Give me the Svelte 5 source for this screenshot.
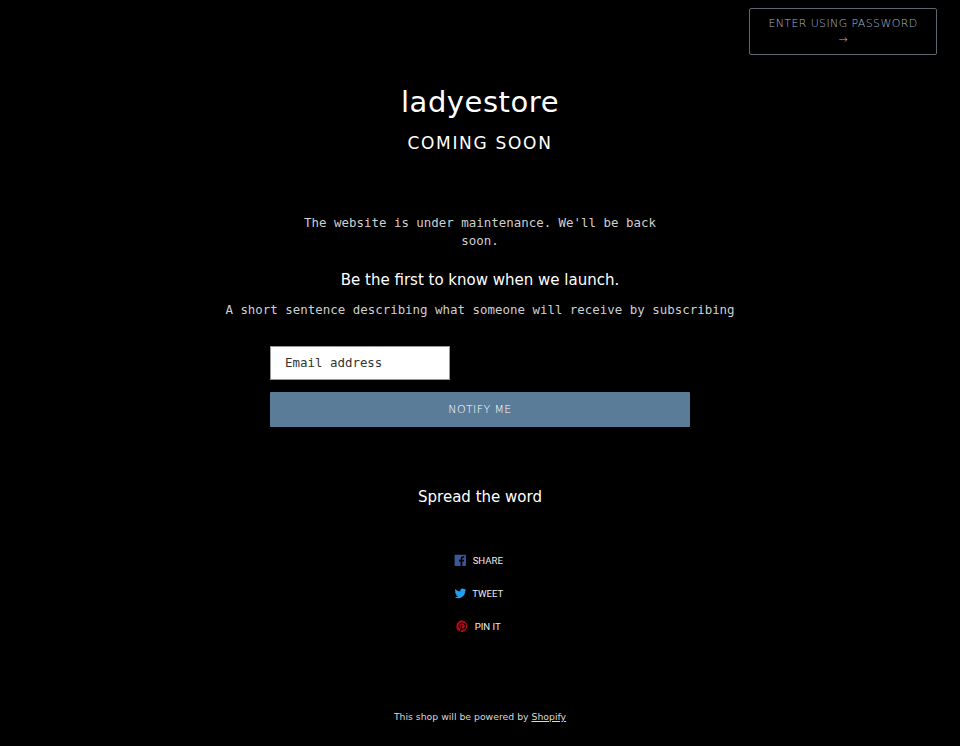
<script>
  const shares = [
    { label: 'SHARE', color: '#3b5998', path: 'M2 1h16a1 1 0 0 1 1 1v16a1 1 0 0 1-1 1h-4.6v-7h2.4l.4-2.8h-2.8V7.4c0-.8.2-1.4 1.4-1.4h1.5V3.500c-.3 0-1.100-.1-2.100-.1-2.100 0-3.600 1.300-3.600 3.700v2.100H8v2.800h2.400v7H2a1 1 0 0 1-1-1V2a1 1 0 0 1 1-1z' },
    { label: 'TWEET', color: '#1da1f2', path: 'M19.500 4.300c-.7.3-1.400.5-2.200.6.800-.5 1.400-1.200 1.700-2.100-.7.4-1.600.8-2.400.9a3.900 3.900 0 0 0-6.600 3.500C6.800 7 4 5.500 2.100 3.200c-1 1.800-.5 4 1.200 5.200-.6 0-1.200-.2-1.700-.5 0 1.900 1.300 3.500 3.100 3.900-.6.1-1.200.2-1.800.1.500 1.500 1.900 2.700 3.700 2.700A7.900 7.900 0 0 1 .8 16.200 11.100 11.100 0 0 0 17.800 6.300c.7-.5 1.300-1.200 1.700-2z' },
    { label: 'PIN IT', color: '#bd081c', path: 'M10 .8a9.200 9.200 0 0 0-3.400 17.800c-.1-.7-.2-1.900 0-2.700l1.100-4.600s-.3-.6-.3-1.400c0-1.300.7-2.200 1.700-2.200.8 0 1.200.6 1.200 1.300 0 .8-.5 2-.8 3.100-.2.900.5 1.700 1.400 1.700 1.700 0 2.900-1.800 2.900-4.300 0-2.200-1.600-3.800-3.900-3.800-2.700 0-4.200 2-4.200 4.100 0 .8.300 1.700.7 2.100.1.100.1.200.1.300l-.3 1.100c0 .2-.1.200-.3.100-1.200-.6-1.900-2.300-1.900-3.700 0-3 2.200-5.800 6.300-5.800 3.300 0 5.900 2.400 5.900 5.500 0 3.300-2.100 6-5 6-1 0-1.900-.5-2.200-1.100l-.6 2.300c-.2.800-.8 1.900-1.200 2.500A9.200 9.200 0 1 0 10 .8z' }
  ];
</script>

<div class="page">
  <div class="top">
    <a class="enter" href="#password">ENTER USING PASSWORD<br />→</a>
  </div>

  <header class="brand">
    <h1>ladyestore</h1>
    <h2>COMING SOON</h2>
  </header>

  <main class="content">
    <p class="maint">The website is under maintenance. We'll be back soon.</p>
    <h3 class="launch">Be the first to know when we launch.</h3>
    <p class="desc">A short sentence describing what someone will receive by subscribing</p>
    <form class="signup" onsubmit={(e) => e.preventDefault()}>
      <input type="email" placeholder="Email address" />
      <button type="submit">NOTIFY ME</button>
    </form>
  </main>

  <section class="spread">
    <h3>Spread the word</h3>
    <ul>
      {#each shares as s}
        <li>
          <svg viewBox="0 0 20 20" width="12.500" height="12.500" aria-hidden="true"><path d={s.path} fill={s.color} /></svg>
          <span>{s.label}</span>
        </li>
      {/each}
    </ul>
  </section>

  <footer>This shop will be powered by <a href="#shopify">Shopify</a></footer>
</div>

<style>
  :global(body) {
    background: #000;
    color: #fff;
    font-family: "DejaVu Sans", sans-serif;
  }
  .page {
    height: 746px;
    box-sizing: border-box;
    overflow: hidden;
    display: flex;
    flex-direction: column;
  }
  .top {
    display: flex;
    justify-content: flex-end;
    padding: 8px 23px 0 0;
  }
  .enter {
    box-sizing: border-box;
    width: 188px;
    height: 47px;
    border: 1px solid #5e666e;
    border-radius: 2px;
    color: #a2b4c8;
    text-decoration: none;
    text-align: center;
    font-family: "DejaVu Sans", sans-serif;
    font-weight: 200;
    font-size: 11px;
    letter-spacing: 0.38px;
    line-height: 16px;
    padding-top: 7px;
  }
  .brand {
    text-align: center;
    margin-top: 27px;
  }
  h1 {
    margin: 0;
    font-weight: 400;
    font-size: 29px;
    line-height: 40px;
    letter-spacing: 0.55px;
  }
  h2 {
    margin: 9px 0 0;
    font-weight: 400;
    font-size: 17px;
    line-height: 24px;
    letter-spacing: 1.7px;
  }
  .content {
    text-align: center;
    margin-top: 59px;
  }
  p {
    font-family: "DejaVu Sans Mono", monospace;
    font-size: 12.45px;
    color: #cfcfcf;
    margin: 0;
    line-height: 18px;
  }
  .maint {
    width: 380px;
    margin: 0 auto;
  }
  .launch {
    margin: 19px 0 0;
    font-weight: 400;
    font-size: 15px;
    line-height: 22px;
  }
  .desc {
    margin-top: 10px;
  }
  .signup {
    width: 420px;
    margin: 27px auto 0;
    display: flex;
    flex-direction: column;
    align-items: flex-start;
    gap: 12px;
  }
  input {
    box-sizing: border-box;
    width: 180px;
    height: 34px;
    border: 1px solid #999;
    background: #fff;
    padding: 0 14px 2px;
    font-family: "DejaVu Sans Mono", monospace;
    font-size: 12.45px;
    border-radius: 0;
  }
  input::placeholder {
    color: #333;
    opacity: 1;
  }
  button {
    width: 100%;
    height: 35px;
    border: none;
    border-radius: 1px;
    background: #5a7c99;
    color: #fff;
    font-family: "DejaVu Sans", sans-serif;
    font-weight: 200;
    font-size: 11px;
    letter-spacing: 0.38px;
  }
  .spread {
    text-align: center;
    margin-top: 59px;
  }
  .spread h3 {
    margin: 0;
    font-weight: 400;
    font-size: 15px;
    line-height: 22px;
  }
  ul {
    list-style: none;
    margin: 44px 0 0;
    padding: 0;
    display: flex;
    flex-direction: column;
    gap: 17px;
  }
  li {
    display: flex;
    justify-content: center;
    align-items: center;
    gap: 6px;
    height: 16px;
    padding-right: 3px;
    font-family: "Roboto", sans-serif;
    font-size: 9.6px;
    color: #eee;
  }
  footer {
    margin-top: 76px;
    text-align: center;
    font-size: 9.3px;
    line-height: 14px;
    color: #d8d8d8;
  }
  footer a {
    color: inherit;
  }
</style>
